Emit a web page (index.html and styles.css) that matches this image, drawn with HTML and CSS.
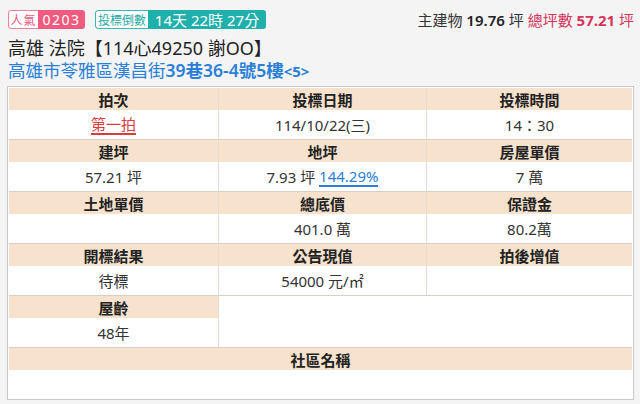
FILE: index.html
```html
<!DOCTYPE html>
<html lang="zh-Hant">
<head>
<meta charset="utf-8">
<link rel="stylesheet" href="styles.css">
</head>
<body>
<div class="page">
  <div class="top">
    <div class="badges">
      <span class="badge pink"><span class="lbl">人氣</span><span class="val">0203</span></span>
      <span class="badge teal"><span class="lbl">投標倒數</span><span class="val">14天 22時 27分</span></span>
    </div>
    <div class="area">主建物 <b class="num">19.76</b> 坪 <span class="red">總坪數 <b>57.21</b> 坪</span></div>
  </div>
  <div class="title">高雄 法院【114心49250 謝OO】</div>
  <div class="addr">高雄市苓雅區漢昌街<b>39巷36-4號5樓</b><b class="sm">&lt;5&gt;</b></div>

  <div class="tbl">
    <div class="hd">拍次</div><div class="hd c">投標日期</div><div class="hd c">投標時間</div>
    <div class="td"><span class="u-red">第一拍</span></div><div class="td c">114/10/22(三)</div><div class="td c">14：30</div>

    <div class="hd">建坪</div><div class="hd c">地坪</div><div class="hd c">房屋單價</div>
    <div class="td">57.21 坪</div><div class="td c">7.93 坪&nbsp;<span class="u-blue">144.29%</span></div><div class="td c">7 萬</div>

    <div class="hd">土地單價</div><div class="hd c">總底價</div><div class="hd c">保證金</div>
    <div class="td"></div><div class="td c">401.0 萬</div><div class="td c">80.2萬</div>

    <div class="hd">開標結果</div><div class="hd c">公告現值</div><div class="hd c">拍後增值</div>
    <div class="td">待標</div><div class="td c">54000 元/㎡</div><div class="td c"></div>

    <div class="hd">屋齡</div><div class="blank"></div>
    <div class="td">48年</div>

    <div class="hd full">社區名稱</div>
    <div class="td full"></div>
  </div>
</div>
</body>
</html>
```

FILE: styles.css
```css
html, body {
  margin: 0;
  padding: 0;
  background: #f4f4f5;
}
body {
  font-family: "Noto Sans", "Noto Sans CJK TC", sans-serif;
  color: #222;
}
.page {
  padding: 10px 6px 0 7px;
}
.top {
  display: flex;
  justify-content: space-between;
  align-items: center;
  height: 19px;
}
.badges {
  display: flex;
  gap: 10px;
  padding-left: 1px;
}
.badge {
  display: inline-flex;
  flex-shrink: 0;
  height: 19px;
  border-radius: 3px;
  overflow: hidden;
  white-space: nowrap;
}
.badge .lbl, .badge .val {
  display: flex;
  align-items: center;
  justify-content: center;
  box-sizing: border-box;
}
.badge .lbl {
  background: #fff;
  font-size: 12px;
  border: 1px solid;
  border-right: none;
  border-radius: 3px 0 0 3px;
}
.badge .val {
  color: #fff;
}
.pink .lbl { color: #e9557a; border-color: #ef7d97; width: 30px; letter-spacing: 1px; }
.pink .val { background: #ef5a7e; font-size: 14px; width: 47px; letter-spacing: 1.5px; }
.teal .lbl { color: #1fa9a5; border-color: #3ab8b3; width: 53px; }
.teal .val { background: #1fb0ab; font-size: 15px; width: 118px; }
.area {
  font-size: 15px;
  color: #333;
  white-space: nowrap;
}
.area .num { color: #222; font-weight: 600; }
.red { color: #d6345b; }
.red b { font-weight: 700; }
.title {
  margin-top: 8px;
  font-size: 18px;
  line-height: 22px;
  padding-left: 1px;
  color: #222;
}
.addr {
  font-size: 17.5px;
  line-height: 22px;
  color: #2b7fd6;
  padding-left: 1px;
}
.addr b { font-weight: 600; }
.addr .sm { font-size: 15px; font-weight: 700; }
.tbl {
  margin-top: 4px;
  display: grid;
  grid-template-columns: 209px 208px 1fr;
  background: #fff;
  border: 1px solid #c9c9c9;
  padding: 1px 1px 0 1px;
  box-shadow: 0 1px 1px rgba(0,0,0,0.08);
  font-size: 15px;
  text-align: center;
}
.hd, .td {
  display: flex;
  align-items: center;
  justify-content: center;
  box-sizing: border-box;
  white-space: nowrap;
}
.hd {
  height: 23px;
  background: #f6e2cd;
  font-weight: 700;
  border-top: 1px solid #d9cfc4;
}
.hd:first-child, .hd:nth-child(2), .hd:nth-child(3) { border-top: none; height: 22px; }
.td {
  height: 29px;
  color: #333;
}
.c { border-left: 1px solid #e3ddd6; }
.blank {
  grid-column: 2 / 4;
  grid-row: span 2;
  border-left: 1px solid #e3ddd6;
  border-top: 1px solid #d9cfc4;
}
.full { grid-column: 1 / 4; }
.u-red {
  color: #dc3b3b;
  border-bottom: 2px solid #dc3b3b;
  line-height: 18px;
}
.u-blue {
  color: #2b7fd6;
  border-bottom: 2px solid #2b7fd6;
  line-height: 18px;
}
```
